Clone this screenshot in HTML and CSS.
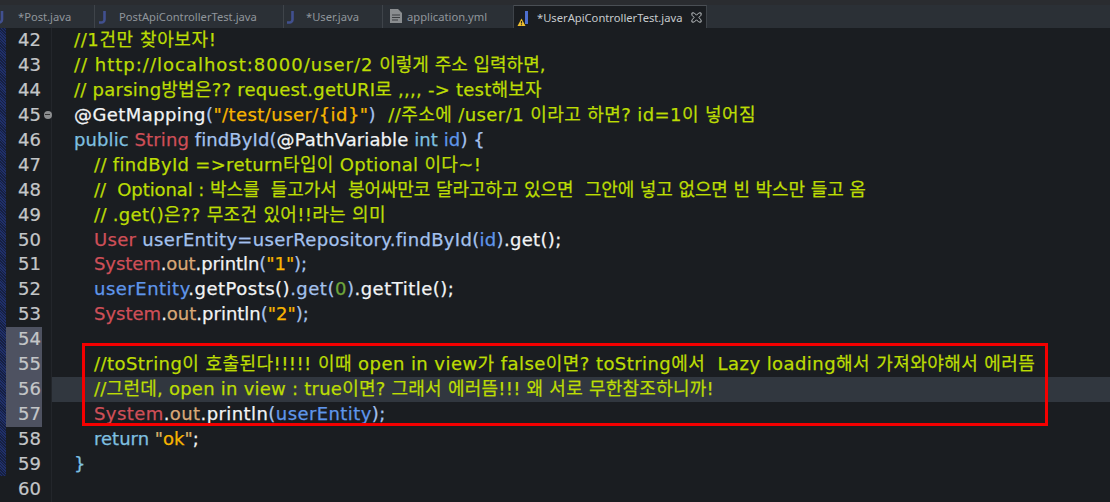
FILE: index.html
```html
<!DOCTYPE html>
<html lang="ko">
<head>
<meta charset="utf-8">
<title>UserApiControllerTest.java</title>
<link rel="stylesheet" href="styles.css">
</head>
<body>
<div class="window">
  <div class="tabs">
    <div class="tab t1"><svg class="ji" viewBox="0 0 10 14"><path d="M7 1v8.500a3 3 0 0 1-3 3H1.500" /></svg><span>*Post.java</span></div>
    <div class="tab t2"><svg class="ji" viewBox="0 0 10 14"><path d="M6.500 1v8.500a3 3 0 0 1-3 3H1" /></svg><span>PostApiControllerTest.java</span></div>
    <div class="tab t3"><svg class="ji" viewBox="0 0 10 14"><path d="M6.500 1v8.500a3 3 0 0 1-3 3H1" /></svg><span>*User.java</span></div>
    <div class="tab t4"><svg class="fi" viewBox="0 0 12 14"><path d="M0 0h8l4 4v10H0z" fill="#8a8d90"/><path d="M2 6h8M2 8.500h8M2 11h6" stroke="#3a3d40" stroke-width="1"/></svg><span>application.yml</span></div>
    <div class="tab active"><svg class="wi" viewBox="0 0 14 18"><path d="M8 0h3v13H8z" fill="#4d6fd0"/><path d="M4.500 7.500l4 7.500H.5z" fill="#f2c230"/><path d="M4.500 10v2.500M4.500 13.300v1" stroke="#2b2b20" stroke-width="1.200"/></svg><span>*UserApiControllerTest.java</span><svg class="close" viewBox="0 0 12 12"><path d="M1 1h2.500L6 3.500 8.500 1H11v2.500L8.500 6 11 8.500V11H8.500L6 8.500 3.500 11H1V8.500L3.500 6 1 3.500z"/></svg></div>
  </div>
  <div class="editor">
    <div class="strip"></div>
    <div class="gutter">
      <div class="num">42</div><div class="num">43</div><div class="num">44</div>
      <div class="num fold">45<i class="foldmark"></i></div>
      <div class="num">46</div><div class="num">47</div><div class="num">48</div><div class="num">49</div>
      <div class="num">50</div><div class="num">51</div><div class="num">52</div><div class="num">53</div>
      <div class="num sel">54</div><div class="num sel">55</div><div class="num sel">56</div><div class="num sel">57</div>
      <div class="num">58</div><div class="num">59</div><div class="num">60</div>
    </div>
    <div class="code">
      <div class="line sp6"><span class="c">//1건만 찾아보자!</span></div>
      <div class="line"><span class="c sp10">// http://localhost:8000/user/2</span><span class="c"> 이렇게 주소 입력하면,</span></div>
      <div class="line sp2"><span class="c">// parsing방법은?? request.getURI로 ,,,, -&gt; test해보자</span></div>
      <div class="line sp4"><span class="w">@GetMapping</span><span class="m">(</span><span class="s">"/test/user/{id}"</span><span class="m">)</span><span class="c">&nbsp; //주소에 /user/1 이라고 하면? id=1이 넣어짐</span></div>
      <div class="line sp1"><span class="k">public</span> <span class="t">String</span> <span class="m">findById(</span><span class="w">@PathVariable</span> <span class="k">int</span> <span class="b">id</span><span class="m">) {</span></div>
      <div class="line in sp3"><span class="c">// findById =&gt;return타입이 Optional 이다~!</span></div>
      <div class="line in spn"><span class="c">//&nbsp; Optional : 박스를&nbsp; 들고가서&nbsp; 붕어싸만코 달라고하고 있으면&nbsp; 그안에 넣고 없으면 빈 박스만 들고 옴</span></div>
      <div class="line in sp3"><span class="c">// .get()은?? 무조건 있어!!라는 의미</span></div>
      <div class="line in sp3"><span class="t">User</span> <span class="m">userEntity=userRepository.findById(</span><span class="b">id</span><span class="m">)</span><span class="w">.get();</span></div>
      <div class="line in spn"><span class="t">System</span><span class="w">.</span><span class="o">out</span><span class="w">.println</span><span class="m">(</span><span class="s">"1"</span><span class="m">);</span></div>
      <div class="line in sp5"><span class="b">userEntity</span><span class="w">.getPosts()</span><span class="m">.get(</span><span class="g">0</span><span class="m">)</span><span class="w">.getTitle();</span></div>
      <div class="line in"><span class="t">System</span><span class="w">.</span><span class="o">out</span><span class="w">.println</span><span class="m">(</span><span class="s">"2"</span><span class="m">);</span></div>
      <div class="line"></div>
      <div class="line in sp45"><span class="c">//toString이 호출된다!!!!! 이때 open in view가 false이면? toString에서&nbsp; Lazy loading해서 가져와야해서 에러뜸</span></div>
      <div class="line in current sp2"><span class="c">//그런데, open in view : true이면? 그래서 에러뜸!!! 왜 서로 무한참조하니까!</span></div>
      <div class="line in sp4"><span class="t">System</span><span class="w">.</span><span class="o">out</span><span class="w">.println</span><span class="m">(</span><span class="b">userEntity</span><span class="m">);</span></div>
      <div class="line in"><span class="k">return</span> <span class="s2">"</span><span class="s">ok</span><span class="s2">"</span><span class="w">;</span></div>
      <div class="line"><span class="k">}</span></div>
      <div class="line"></div>
    </div>
    <div class="redbox"></div>
  </div>
</div>
</body>
</html>
```
FILE: styles.css
```css
* { box-sizing: border-box; }
html, body { margin: 0; padding: 0; height: 100%; overflow: hidden; background: #1a1d21; }
.window { width: 1110px; height: 502px; display: flex; flex-direction: column; font-family: "DejaVu Sans", "Noto Sans CJK KR", sans-serif; }
.tabs { height: 28px; padding-top: 5px; background: #2b3036; box-shadow: inset 0 5px 0 #2a2c30; display: flex; flex: none; }
.tab { display: flex; align-items: center; height: 23px; font-family: "Noto Sans", sans-serif; font-size: 11.200px; color: #90969c; border-right: 1px solid #3f444a; position: relative; white-space: nowrap; }
.tab span { display: block; }
.t1 { width: 95px; padding-left: 18px; }
.t2 { width: 189px; padding-left: 24px; }
.t3 { width: 99px; padding-left: 22px; }
.t4 { width: 131px; padding-left: 24px; }
.active { background: #1a1d21; color: #c6cacd; padding-left: 23px; width: 193px; border-top: 1px solid #4a4f55; }
.ji { position: absolute; width: 10px; height: 14px; fill: none; stroke: #41508f; stroke-width: 2.600; }
.t1 .ji { left: -5px; top: 5px; }
.t2 .ji { left: 3px; top: 5px; }
.t3 .ji { left: 2px; top: 5px; }
.fi { position: absolute; left: 7px; top: 4px; width: 12px; height: 14px; }
.wi { position: absolute; left: 3px; top: 5px; width: 14px; height: 18px; }
.close { width: 11px; height: 11px; margin-left: 9px; fill: none; stroke: #c6cacd; stroke-width: 1; }
.editor { flex: 1; display: flex; position: relative; background: #1a1d21; min-height: 0; }
.strip { width: 6px; height: 448px; flex: none; background: #1e2a55; background-image: repeating-linear-gradient(45deg, #162041 0 1px, #20306a 1px 2px); }
.gutter { width: 46px; flex: none; border-right: 1px solid #23262b; }
.num { height: 24.940px; width: 36px; padding-left: 12px; font-size: 18px; line-height: 24.940px; color: #c4c6c8; position: relative; font-family: "DejaVu Sans", sans-serif; -webkit-text-stroke: 0.2px currentColor; }
.sel { background: #4e5261; }
.fold { width: 46px; }
.foldmark { position: absolute; left: 37.500px; top: 8px; width: 8px; height: 8px; border-radius: 50%; background: #8c8e90; }
.foldmark::after { content: ""; position: absolute; left: 1.500px; top: 3.500px; width: 5px; height: 1px; background: #333; }
.code { flex: 1; min-width: 0; }
.line { height: 24.940px; line-height: 24.940px; font-size: 18px; padding-left: 22px; white-space: pre; -webkit-text-stroke: 0.25px currentColor; }
.line.in { padding-left: 42px; }
.current { background: #31373f; }
.sp1 { letter-spacing: 0.100px; }
.sp2 { letter-spacing: 0.240px; }
.sp3 { letter-spacing: 0.320px; }
.sp4 { letter-spacing: 0.420px; }
.sp45 { letter-spacing: 0.440px; }
.sp5 { letter-spacing: 0.500px; }
.sp6 { letter-spacing: 0.600px; }
.sp10 { letter-spacing: 1px; }
.spn { letter-spacing: -0.080px; }
.c { color: #bcdc04; }
.w { color: #f2f4f5; }
.s { color: #f7b500; }
.s2 { color: #d8b36a; }
.k { color: #7fc0e0; }
.t { color: #cf4f58; }
.m { color: #a4c2ee; }
.b { color: #5f96ea; }
.o { color: #d8a877; }
.g { color: #6ea63c; }
.redbox { position: absolute; left: 82px; top: 315px; width: 966px; height: 83px; border: 3px solid #f40000; pointer-events: none; }
```
